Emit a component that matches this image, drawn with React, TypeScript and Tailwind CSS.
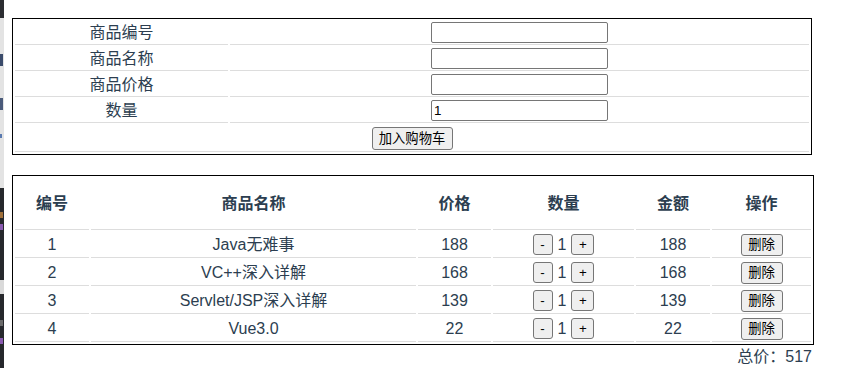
import React from "react";

const books = [
  { id: 1, name: "Java无难事", price: 188, count: 1 },
  { id: 2, name: "VC++深入详解", price: 168, count: 1 },
  { id: 3, name: "Servlet/JSP深入详解", price: 139, count: 1 },
  { id: 4, name: "Vue3.0", price: 22, count: 1 },
];

const fields = ["商品编号", "商品名称", "商品价格", "数量"];

const btn =
  "inline-flex h-[21px] items-center justify-center rounded-[3px] border border-[#767676] bg-[#efefef] px-0 align-middle text-[13.33px] leading-none text-black";

function EdgeStrip() {
  // slice of another window at the very left edge of the capture
  return (
    <div className="flex h-[368px] w-[4px] shrink-0 flex-col">
      <div className="h-[18px] bg-[#2b2d31]" />
      <div className="flex h-[170px] flex-col bg-[#e3e3e3]">
        <div className="mt-[36px] h-[12px] w-[3px] bg-[#3a4a6a]" />
        <div className="mt-[32px] h-[12px] w-[3px] bg-[#4a5a7a]" />
        <div className="mt-[24px] h-[4px] w-[2px] bg-[#5a7ab0]" />
      </div>
      <div className="flex h-[92px] flex-col bg-[#26282c]">
        <div className="mt-[24px] h-[6px] w-[3px] bg-[#a0703a]" />
        <div className="mt-[6px] h-[6px] w-[3px] bg-[#8a5ab0]" />
      </div>
      <div className="h-[14px] bg-[#d9d9d9]" />
      <div className="flex flex-1 flex-col bg-[#26282c]">
        <div className="mt-[26px] h-[6px] w-[3px] bg-[#6a6a6a]" />
        <div className="mt-[12px] h-[6px] w-[3px] bg-[#8a5ab0]" />
      </div>
    </div>
  );
}

export default function App() {
  const total = books.reduce((s, b) => s + b.price * b.count, 0);
  return (
    <div
      className="flex h-[368px] w-[851px] overflow-hidden bg-white text-[16px] text-[#2c3e50]"
      style={{ fontFamily: '"Liberation Sans", Arial, "Noto Sans CJK SC", sans-serif' }}
    >
      <EdgeStrip />
      <div className="flex flex-col pl-[8px] pt-[18px]">
        <table className="w-[800px] table-fixed border-separate border-spacing-[2px] border border-black">
          <tbody>
            {fields.map((f, i) => (
              <tr key={f}>
                <td className="w-[213px] border-b border-[#dddddd] p-[1px] text-center leading-[21px]">
                  {f}
                </td>
                <td className="w-[579px] border-b border-[#dddddd] p-[1px] text-center leading-[21px]">
                  <input
                    type="text"
                    defaultValue={i === 3 ? "1" : ""}
                    className="h-[21px] w-[177px] rounded-[2px] border border-[#767676] bg-white px-[2px] align-top text-[13.33px] text-black"
                  />
                </td>
              </tr>
            ))}
            <tr>
              <td colSpan={2} className="h-[27px] border-b border-[#dddddd] p-0 text-center">
                <button className={`${btn} h-[23px] w-[81px]`}>加入购物车</button>
              </td>
            </tr>
          </tbody>
        </table>

        <table className="mt-[20px] w-[800px] table-fixed border-separate border-spacing-[2px] border border-black">
          <thead>
            <tr>
              {[
                ["编号", "w-[74px]"],
                ["商品名称", "w-[325px]"],
                ["价格", "w-[73px]"],
                ["数量", "w-[141px]"],
                ["金额", "w-[74px]"],
                ["操作", "w-[99px]"],
              ].map(([t, w]) => (
                <th
                  key={t}
                  className={`${w} h-[52px] border-b border-[#dddddd] p-0 text-center font-bold leading-[21px]`}
                >
                  {t}
                </th>
              ))}
            </tr>
          </thead>
          <tbody>
            {books.map((b) => (
              <tr key={b.id}>
                <td className="h-[26px] border-b border-[#dddddd] p-0 text-center leading-[21px]">{b.id}</td>
                <td className="border-b border-[#dddddd] p-0 text-center leading-[21px]">{b.name}</td>
                <td className="border-b border-[#dddddd] p-0 text-center leading-[21px]">{b.price}</td>
                <td className="border-b border-[#dddddd] p-0 text-center leading-[21px]">
                  <div className="flex items-center justify-center gap-[5px]">
                    <button className={`${btn} w-[20px]`}>-</button>
                    <span>{b.count}</span>
                    <button className={`${btn} w-[23px]`}>+</button>
                  </div>
                </td>
                <td className="border-b border-[#dddddd] p-0 text-center leading-[21px]">
                  {b.price * b.count}
                </td>
                <td className="border-b border-[#dddddd] p-0 text-center leading-[21px]">
                  <button className={`${btn} h-[22px] w-[42px]`}>删除</button>
                </td>
              </tr>
            ))}
          </tbody>
        </table>
        <div className="w-[800px] text-right leading-[24px]">总价：{total}</div>
      </div>
    </div>
  );
}
